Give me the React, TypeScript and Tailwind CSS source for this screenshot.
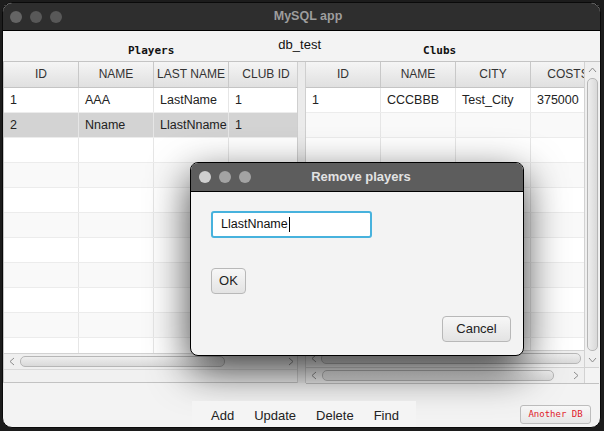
import React from "react";

const SANS = "font-['Liberation_Sans',Arial,sans-serif]";
const MONO = "font-['DejaVu_Sans_Mono',monospace]";

function Chev({ dir }: { dir: "l" | "r" | "u" | "d" }) {
  const pts =
    dir === "l"
      ? "5,1 1,4.5 5,8"
      : dir === "r"
      ? "1,1 5,4.5 1,8"
      : dir === "u"
      ? "1,5 4.5,1 8,5"
      : "1,1 4.5,5 8,1";
  const w = dir === "l" || dir === "r" ? 6 : 9;
  const h = dir === "l" || dir === "r" ? 9 : 6;
  return (
    <svg width={w} height={h} viewBox={`0 0 ${w} ${h}`}>
      <polyline points={pts} fill="none" stroke="#8c8c8c" strokeWidth="1" />
    </svg>
  );
}

function Thumb({ w }: { w: number }) {
  return (
    <div
      className="h-[11px] shrink-0 rounded-[5px] border border-[#b6b6b6] bg-gradient-to-b from-[#eeeeee] to-[#d9d9d9]"
      style={{ width: w }}
    />
  );
}

type Row = string[];

function Table({
  cols,
  rows,
  width,
  bodyH,
  selected,
}: {
  cols: string[];
  rows: Row[];
  width: number;
  bodyH: number;
  selected?: number;
}) {
  const n = 11;
  return (
    <div className="flex flex-col overflow-hidden" style={{ width }}>
      <div className="flex h-[26px] shrink-0 border-b border-[#c4c4c4]">
        {cols.map((c) => (
          <div
            key={c}
            className="w-[75px] shrink-0 border-r border-[#c8c8c8] bg-gradient-to-b from-[#f5f5f5] to-[#e0e0e0] text-center text-[12px] leading-[25px] text-[#333]"
          >
            {c}
          </div>
        ))}
      </div>
      <div className="flex flex-col overflow-hidden" style={{ height: bodyH }}>
        {Array.from({ length: n }).map((_, i) => {
          const r = rows[i];
          const bg =
            selected === i ? "bg-[#d3d3d3]" : i % 2 === 0 ? "bg-white" : "bg-[#f9f9f9]";
          return (
            <div key={i} className={`flex h-[25px] shrink-0 border-b border-[#ececec] ${bg}`}>
              {cols.map((c, j) => (
                <div
                  key={c}
                  className="w-[75px] shrink-0 border-r border-[#e6e6e6] pl-[6px] text-[12.5px] leading-[25px] text-[#222]"
                >
                  {r ? r[j] : ""}
                </div>
              ))}
            </div>
          );
        })}
      </div>
    </div>
  );
}

function Light({ c }: { c: string }) {
  return <div className="h-[12px] w-[12px] rounded-full" style={{ backgroundColor: c }} />;
}

function Btn({ children, w }: { children: React.ReactNode; w: number }) {
  return (
    <div
      className="flex h-[26px] items-center justify-center rounded-[4px] border border-[#b8b8b8] bg-gradient-to-b from-[#f7f7f7] to-[#e3e3e3] text-[13px] text-[#222]"
      style={{ width: w }}
    >
      {children}
    </div>
  );
}

export default function App() {
  return (
    <div className={`relative h-[431px] w-[604px] overflow-hidden bg-[#1c1c1c] ${SANS}`}>
      {/* main window */}
      <div className="ml-[2px] mt-[2px] flex h-[426px] w-[599px] flex-col overflow-hidden rounded-[10px] border border-[#0a0a0a] bg-[#f3f3f3]">
        {/* title bar */}
        <div className="grid h-[28px] shrink-0 grid-cols-[1fr_auto_1fr] items-center border-b border-black bg-[#2e2e2e] pl-[7px]">
          <div className="flex gap-[8px]">
            <Light c="#646464" />
            <Light c="#585858" />
            <Light c="#585858" />
          </div>
          <div className="pl-[6px] text-center text-[12.5px] font-bold text-[#9d9d9d]">MySQL app</div>
          <div />
        </div>

        {/* labels */}
        <div className="flex h-[30px] shrink-0 items-start">
          <div className={`ml-[125px] mt-[13px] text-[11px] font-bold leading-[14px] text-[#111] ${MONO}`}>
            Players
          </div>
          <div className="ml-[104px] mt-[6px] text-[13px] leading-[16px] text-[#111]">db_test</div>
          <div className={`ml-[102px] mt-[13px] text-[11px] font-bold leading-[14px] text-[#111] ${MONO}`}>
            Clubs
          </div>
        </div>

        {/* split pane */}
        <div className="flex h-[322px] shrink-0 border-t border-[#c4c4c4]">
          {/* left */}
          <div className="flex w-[294px] shrink-0 flex-col border-l border-[#c4c4c4]">
            <Table
              cols={["ID", "NAME", "LAST NAME", "CLUB ID"]}
              rows={[
                ["1", "AAA", "LastName", "1"],
                ["2", "Nname", "LlastNname", "1"],
              ]}
              width={293}
              bodyH={265}
              selected={1}
            />
            <div className="flex h-[16px] shrink-0 items-center border-t border-[#d2d2d2] bg-[#efefef]">
              <div className="flex w-[16px] justify-center">
                <Chev dir="l" />
              </div>
              <Thumb w={205} />
              <div className="flex-1" />
              <div className="flex w-[12px] justify-center">
                <Chev dir="r" />
              </div>
            </div>
            <div className="flex-1 border-t border-[#dadada] border-b border-b-[#c2c2c2] bg-[#f1f1f1]" />
          </div>

          {/* divider */}
          <div className="w-[9px] shrink-0 border-x border-[#cfcfcf] bg-[#ebebeb]" />

          {/* right */}
          <div className="flex w-[293px] shrink-0 flex-col">
            <div className="flex h-[305px] shrink-0">
              <div className="flex w-[278px] shrink-0 flex-col">
                <Table
                  cols={["ID", "NAME", "CITY", "COSTS"]}
                  rows={[["1", "CCCBBB", "Test_City", "375000"]]}
                  width={278}
                  bodyH={262}
                />
                <div className="flex h-[16px] shrink-0 items-center border-t border-[#d2d2d2] bg-[#efefef]">
                  <div className="flex w-[15px] justify-center">
                    <Chev dir="l" />
                  </div>
                  <Thumb w={260} />
                </div>
              </div>
              <div className="flex w-[15px] shrink-0 flex-col items-center border-l border-[#d2d2d2] bg-[#efefef]">
                <div className="mt-[4px] flex h-[8px] items-center">
                  <Chev dir="u" />
                </div>
                <div className="mt-[4px] h-[273px] w-[11px] rounded-[5px] border border-[#b6b6b6] bg-gradient-to-r from-[#eeeeee] to-[#d9d9d9]" />
                <div className="mt-[5px] flex h-[8px] items-center">
                  <Chev dir="d" />
                </div>
              </div>
            </div>
            <div className="flex h-[16px] shrink-0">
              <div className="flex w-[278px] shrink-0 items-center border-t border-[#d2d2d2] bg-[#efefef]">
                <div className="flex w-[16px] justify-center">
                  <Chev dir="l" />
                </div>
                <Thumb w={232} />
                <div className="flex-1" />
                <div className="flex w-[16px] justify-center">
                  <Chev dir="r" />
                </div>
              </div>
              <div className="w-[15px] border-l border-t border-[#d2d2d2] bg-[#f3f3f3]" />
            </div>
            <div className="flex-1 border-b border-[#c2c2c2]" />
          </div>
        </div>

        {/* bottom */}
        <div className="flex flex-1 items-end">
          <div className="relative z-20 ml-[189px] flex h-[26px] items-center gap-[20px] bg-[#f4f4f4] pl-[19px] pr-[17px] pt-[3px] text-[13px] text-[#222]">
            <span>Add</span>
            <span>Update</span>
            <span>Delete</span>
            <span>Find</span>
          </div>
          <div
            className={`mb-[3px] ml-auto mr-[9px] flex h-[19px] w-[71px] items-center justify-center rounded-[3px] border border-[#bdbdbd] bg-gradient-to-b from-[#f8f8f8] to-[#e6e6e6] text-[9px] text-[#e0202a] ${MONO}`}
          >
            Another DB
          </div>
        </div>
      </div>

      {/* dialog */}
      <div className="absolute left-[190px] top-[162px] z-10 flex h-[194px] w-[334px] flex-col overflow-hidden rounded-[8px] border border-black bg-[#f3f3f3] shadow-[0_14px_40px_rgba(0,0,0,0.75)]">
        <div className="grid h-[29px] shrink-0 grid-cols-[1fr_auto_1fr] items-center border-b border-black bg-[#5d5d5d] pl-[8px]">
          <div className="flex gap-[8px]">
            <Light c="#d0d0d0" />
            <Light c="#a3a3a3" />
            <Light c="#a3a3a3" />
          </div>
          <div className="text-center text-[13px] font-bold text-[#e2e2e2]">Remove players</div>
          <div />
        </div>
        <div className="flex flex-1 flex-col pl-[20px] pr-[12px] pt-[19px]">
          <div className="flex h-[27px] w-[161px] items-center rounded-[3px] border-2 border-[#47b2dd] bg-white pl-[8px] text-[12.5px] text-[#111]">
            LlastNname
            <span className="ml-[1px] inline-block h-[15px] w-[1px] bg-black" />
          </div>
          <div className="mt-[30px]">
            <Btn w={35}>OK</Btn>
          </div>
          <div className="mt-[22px] self-end">
            <Btn w={69}>Cancel</Btn>
          </div>
        </div>
      </div>
    </div>
  );
}
